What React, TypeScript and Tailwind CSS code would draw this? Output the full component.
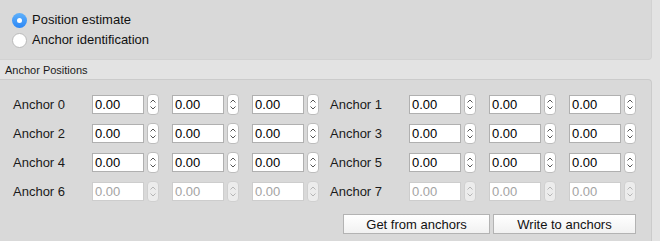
import React from 'react';

const font = { fontFamily: '"Liberation Sans", Arial, sans-serif' };

const Stepper = ({ disabled }: { disabled?: boolean }) => (
  <div
    className={`ml-[3px] flex h-[21px] w-[12px] flex-col items-center justify-center gap-[3px] rounded-[4px] border ${
      disabled ? 'border-[#d0d0d0] bg-[#ececec]' : 'border-[#bdbdbd] bg-white'
    }`}
  >
    <svg width="6" height="4" viewBox="0 0 6 4" fill="none">
      <path d="M0.5 3.5 L3 1 L5.5 3.5" stroke={disabled ? '#b5b5b5' : '#555'} strokeWidth="1" />
    </svg>
    <svg width="6" height="4" viewBox="0 0 6 4" fill="none">
      <path d="M0.5 0.5 L3 3 L5.5 0.5" stroke={disabled ? '#b5b5b5' : '#555'} strokeWidth="1" />
    </svg>
  </div>
);

const SpinField = ({ disabled, first }: { disabled?: boolean; first?: boolean }) => (
  <div className={`flex items-center ${first ? '' : 'ml-[13px]'}`}>
    <div
      className={`flex h-[19px] w-[52px] items-center border pl-[2px] text-[13px] ${
        disabled ? 'border-[#cdcdcd] bg-white text-[#a3a3a3]' : 'border-[#b0b0b0] bg-white text-black'
      }`}
    >
      0.00
    </div>
    <Stepper disabled={disabled} />
  </div>
);

const AnchorGroup = ({ n, disabled, right }: { n: number; disabled?: boolean; right?: boolean }) => (
  <div className={`flex items-center ${right ? 'ml-[11px]' : ''}`}>
    <span className={`${right ? 'w-[79px]' : 'w-[79px]'} text-[13px] text-[#1a1a1a]`}>Anchor {n}</span>
    <SpinField disabled={disabled} first />
    <SpinField disabled={disabled} />
    <SpinField disabled={disabled} />
  </div>
);

const Radio = ({ checked, label }: { checked?: boolean; label: string }) => (
  <div className="flex h-[20px] items-center">
    {checked ? (
      <div className="flex h-[15px] w-[15px] items-center justify-center rounded-full bg-gradient-to-b from-[#5fb1fb] to-[#2a86f5]">
        <div className="h-[5px] w-[5px] rounded-full bg-white" />
      </div>
    ) : (
      <div className="h-[15px] w-[15px] rounded-full border border-[#b9b9b9] bg-white" />
    )}
    <span className="ml-[5px] text-[13px] text-[#111]">{label}</span>
  </div>
);

export default function App() {
  const rows = [
    [0, 1, false],
    [2, 3, false],
    [4, 5, false],
    [6, 7, true],
  ] as const;

  return (
    <div className="h-[241px] w-[660px] overflow-hidden bg-[#e3e3e3]" style={font}>
      <div className="flex h-[60px] w-[652px] flex-col rounded-br-[4px] border-r border-b border-[#d2d2d2] bg-[#d9d9d9] pl-[12px] pt-[10px]">
        <Radio checked label="Position estimate" />
        <Radio label="Anchor identification" />
      </div>
      <div className="flex h-[19px] items-end pb-[1px] pl-[5px] text-[11px] text-[#1a1a1a]">Anchor Positions</div>
      <div className="h-[162px] w-[652px] rounded-tr-[4px] border-t border-r border-[#cbcbcb] bg-[#d9d9d9] pl-[13px] pt-[10px]">
        {rows.map(([a, b, dis]) => (
          <div key={a} className="flex h-[29px] items-center">
            <AnchorGroup n={a} disabled={dis} />
            <AnchorGroup n={b} disabled={dis} right />
          </div>
        ))}
        <div className="mt-[8px] flex justify-end gap-[3px] pr-[15px]">
          <button className="h-[20px] w-[147px] border border-[#b3b3b3] bg-gradient-to-b from-white to-[#f1f1f1] text-[13px] text-[#111]">
            Get from anchors
          </button>
          <button className="h-[20px] w-[143px] border border-[#b3b3b3] bg-gradient-to-b from-white to-[#f1f1f1] text-[13px] text-[#111]">
            Write to anchors
          </button>
        </div>
      </div>
    </div>
  );
}
